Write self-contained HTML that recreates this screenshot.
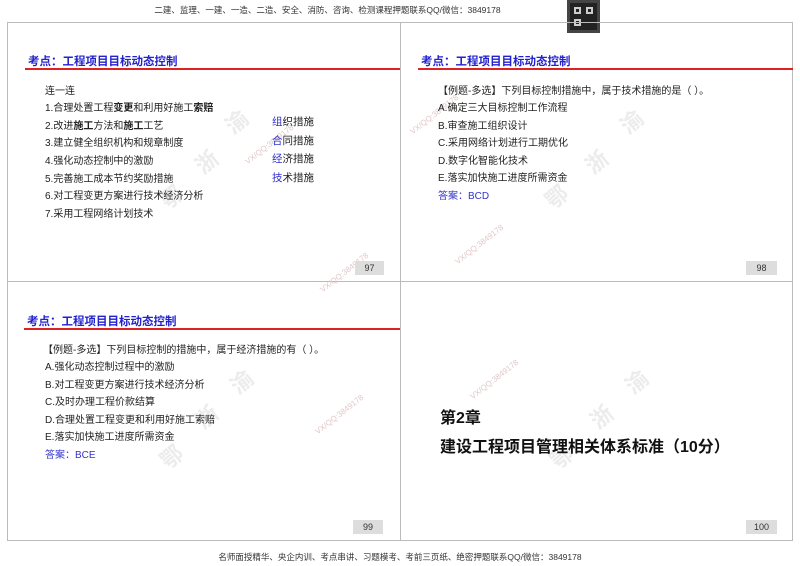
<!DOCTYPE html>
<html><head><meta charset="utf-8"><style>
*{margin:0;padding:0;box-sizing:border-box}
body{width:800px;height:566px;background:#fff;position:relative;overflow:hidden;font-family:"Liberation Sans","Noto Sans CJK SC",sans-serif;color:#222}
.a{position:absolute;white-space:nowrap}
.t{font-size:11.5px;font-weight:bold;color:#2222cc}
.rl{position:absolute;height:2px;background:#d22}
.l{font-size:10px;color:#222}
.b{color:#3333cc}
.pg{position:absolute;background:#ddd;font-size:9px;text-align:center;line-height:14px;width:29px;height:14px;color:#333}
.wm{position:absolute;color:#ececec;font-size:22px;font-weight:bold;transform:rotate(-40deg)}
.vx{position:absolute;color:#e2c8c8;font-size:8px;transform:rotate(-38deg)}
</style></head><body>
<div class="a" style="left:0;width:800px;text-align:center;top:4px;font-size:8.5px;color:#333;padding-right:145px">二建、监理、一建、一造、二造、安全、消防、咨询、检测课程押题联系QQ/微信：3849178</div>
<div class="a" style="left:567px;top:0;width:33px;height:33px;background:#222;border:3px solid #444"><div style="position:absolute;left:4px;top:4px;width:7px;height:7px;border:2px solid #ccc"></div><div style="position:absolute;right:4px;top:4px;width:7px;height:7px;border:2px solid #ccc"></div><div style="position:absolute;left:4px;bottom:4px;width:7px;height:7px;border:2px solid #ccc"></div></div>
<div class="a" style="left:7px;top:22px;width:786px;height:519px;border:1px solid #bbb"></div>
<div class="a" style="left:400px;top:22px;width:1px;height:519px;background:#bbb"></div>
<div class="a" style="left:7px;top:281px;width:786px;height:1px;background:#bbb"></div>

<div class="wm" style="left:225px;top:105px">渝</div><div class="wm" style="left:195px;top:145px">浙</div><div class="wm" style="left:160px;top:180px">鄂</div>
<div class="wm" style="left:620px;top:105px">渝</div><div class="wm" style="left:585px;top:145px">浙</div><div class="wm" style="left:545px;top:180px">鄂</div>
<div class="wm" style="left:230px;top:365px">渝</div><div class="wm" style="left:195px;top:400px">浙</div><div class="wm" style="left:160px;top:440px">鄂</div>
<div class="wm" style="left:625px;top:365px">渝</div><div class="wm" style="left:590px;top:400px">浙</div><div class="wm" style="left:550px;top:440px">鄂</div>
<div class="vx" style="left:240px;top:140px">VX/QQ:3849178</div>
<div class="vx" style="left:315px;top:268px">VX/QQ:3849178</div>
<div class="vx" style="left:405px;top:110px">VX/QQ:3849178</div>
<div class="vx" style="left:450px;top:240px">VX/QQ:3849178</div>
<div class="vx" style="left:310px;top:410px">VX/QQ:3849178</div>
<div class="vx" style="left:465px;top:375px">VX/QQ:3849178</div>

<div class="a t" style="left:28px;top:53px">考点：工程项目目标动态控制</div>
<div class="rl" style="left:25px;top:68px;width:375px"></div>
<div class="a l" style="left:45px;top:82px">连一连</div>
<div class="a l" style="left:45px;top:99px">1.合理处置工程<b>变更</b>和利用好施工<b>索赔</b></div>
<div class="a l" style="left:45px;top:117px">2.改进<b>施工</b>方法和<b>施工</b>工艺</div>
<div class="a l" style="left:45px;top:134px">3.建立健全组织机构和规章制度</div>
<div class="a l" style="left:45px;top:152px">4.强化动态控制中的激励</div>
<div class="a l" style="left:45px;top:170px">5.完善施工成本节约奖励措施</div>
<div class="a l" style="left:45px;top:187px">6.对工程变更方案进行技术经济分析</div>
<div class="a l" style="left:45px;top:205px">7.采用工程网络计划技术</div>
<div class="a l" style="left:272px;top:114px;font-size:10.5px"><span class="b">组</span>织措施</div>
<div class="a l" style="left:272px;top:133px;font-size:10.5px"><span class="b">合</span>同措施</div>
<div class="a l" style="left:272px;top:151px;font-size:10.5px"><span class="b">经</span>济措施</div>
<div class="a l" style="left:272px;top:170px;font-size:10.5px"><span class="b">技</span>术措施</div>
<div class="pg" style="left:355px;top:261px">97</div>

<div class="a t" style="left:421px;top:53px">考点：工程项目目标动态控制</div>
<div class="rl" style="left:418px;top:68px;width:375px"></div>
<div class="a l" style="left:438px;top:82px">【例题-多选】下列目标控制措施中，属于技术措施的是（ ）。</div>
<div class="a l" style="left:438px;top:99px">A.确定三大目标控制工作流程</div>
<div class="a l" style="left:438px;top:117px">B.审查施工组织设计</div>
<div class="a l" style="left:438px;top:134px">C.采用网络计划进行工期优化</div>
<div class="a l" style="left:438px;top:152px">D.数字化智能化技术</div>
<div class="a l" style="left:438px;top:169px">E.落实加快施工进度所需资金</div>
<div class="a l b" style="left:438px;top:187px">答案：BCD</div>
<div class="pg" style="left:746px;top:261px;width:31px">98</div>

<div class="a t" style="left:27px;top:313px">考点：工程项目目标动态控制</div>
<div class="rl" style="left:24px;top:328px;width:376px"></div>
<div class="a l" style="left:43px;top:341px">【例题-多选】下列目标控制的措施中，属于经济措施的有（ ）。</div>
<div class="a l" style="left:45px;top:358px">A.强化动态控制过程中的激励</div>
<div class="a l" style="left:45px;top:376px">B.对工程变更方案进行技术经济分析</div>
<div class="a l" style="left:45px;top:393px">C.及时办理工程价款结算</div>
<div class="a l" style="left:45px;top:411px">D.合理处置工程变更和利用好施工索赔</div>
<div class="a l" style="left:45px;top:428px">E.落实加快施工进度所需资金</div>
<div class="a l b" style="left:45px;top:446px">答案：BCE</div>
<div class="pg" style="left:353px;top:520px;width:30px">99</div>

<div class="a" style="left:440px;top:404px;font-size:16px;font-weight:bold;color:#111">第2章</div>
<div class="a" style="left:440px;top:433px;font-size:16px;font-weight:bold;color:#111">建设工程项目管理相关体系标准（10分）</div>
<div class="pg" style="left:746px;top:520px;width:31px">100</div>

<div class="a" style="left:0;width:800px;text-align:center;top:551px;font-size:8.5px;color:#333">名师面授精华、央企内训、考点串讲、习题模考、考前三页纸、绝密押题联系QQ/微信：3849178</div>
</body></html>
